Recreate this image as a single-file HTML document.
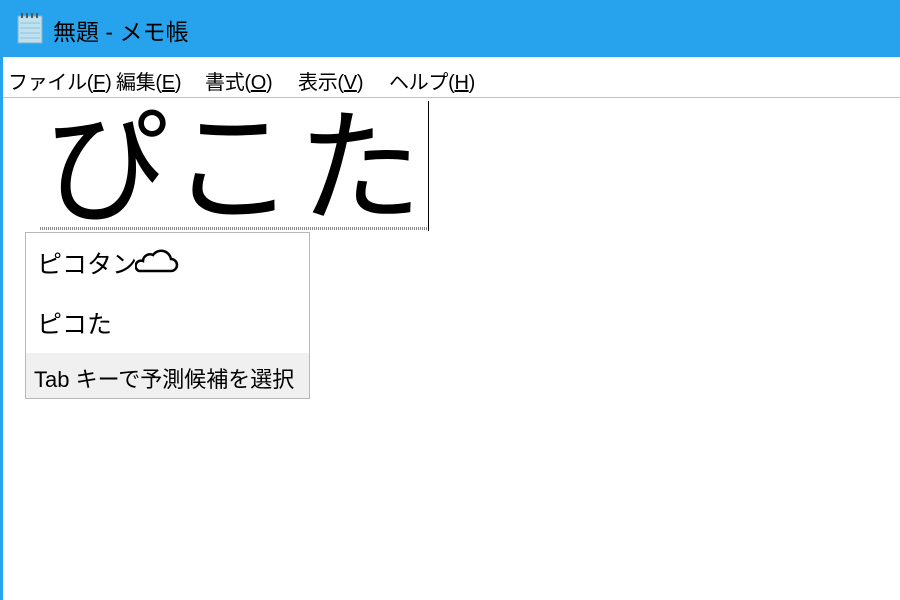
<!DOCTYPE html>
<html><head><meta charset="utf-8"><style>
body{margin:0;width:900px;height:600px;overflow:hidden;background:#fff;position:relative;font-family:"Liberation Sans","Noto Sans CJK JP",sans-serif;}
.title{position:absolute;left:0;top:0;width:900px;height:57px;background:#27a3ee;}
.title span{position:absolute;left:53px;top:13px;font-size:23px;color:#000;}
.menu{position:absolute;left:3px;top:57px;width:897px;height:40px;border-bottom:1px solid #9ccdf0;}
.menu span{position:absolute;top:9px;font-size:20px;color:#000;letter-spacing:-0.3px;}
.lb{position:absolute;left:0;top:57px;width:3px;height:543px;background:#27a3ee;}
.big{position:absolute;left:44px;top:104px;font-size:124px;line-height:130px;color:#000;letter-spacing:3px;font-weight:400;white-space:nowrap;}
.caret{position:absolute;left:428px;top:101px;width:1px;height:130px;background:#000;}
.wave{position:absolute;left:40px;top:227px;width:388px;height:3px;background:repeating-linear-gradient(90deg,#888 0 1px,#fff 1px 2px);}
.pop{position:absolute;left:25px;top:232px;width:283px;height:165px;border:1px solid #b8b8b8;background:#fff;}
.pop .r{position:absolute;left:11px;font-size:25px;color:#000;white-space:nowrap;}
.pop .f{position:absolute;left:0;top:120px;width:283px;height:45px;background:#f0f0f0;}
.pop .f span{position:absolute;left:8px;top:9px;font-size:22px;white-space:nowrap;}
</style></head><body>
<div class="title">
<svg style="position:absolute;left:16px;top:12px" width="30" height="32" viewBox="0 0 30 32"><rect x="2" y="4" width="24" height="27" fill="#bfe0ee" stroke="#7fb0c8"/><g stroke="#8fc4dc"><line x1="4" y1="11" x2="24" y2="11"/><line x1="4" y1="16" x2="24" y2="16"/><line x1="4" y1="21" x2="24" y2="21"/><line x1="4" y1="26" x2="24" y2="26"/></g><g fill="#555"><rect x="5" y="1" width="2" height="5"/><rect x="10" y="1" width="2" height="5"/><rect x="15" y="1" width="2" height="5"/><rect x="20" y="1" width="2" height="5"/></g></svg>
<span>無題 - メモ帳</span></div>
<div class="lb"></div>
<div class="menu">
<span style="left:5px">ファイル(<u>F</u>)</span>
<span style="left:113px">編集(<u>E</u>)</span>
<span style="left:202px">書式(<u>O</u>)</span>
<span style="left:295px">表示(<u>V</u>)</span>
<span style="left:386px">ヘルプ(<u>H</u>)</span>
</div>
<div class="big">ぴこた</div>
<div class="caret"></div>
<div class="wave"></div>
<div class="pop">
<div class="r" style="top:12px">ピコタン<svg width="44" height="30" viewBox="0 0 44 30" style="vertical-align:-2px;margin-left:-2px"><path d="M4 26 H36 a6 6 0 0 0 0-12 a10 10 0 0 0-18-4 a7 7 0 0 0-10 6 a5 5 0 0 0-4 10z" fill="none" stroke="#000" stroke-width="2.5"/></svg></div>
<div class="r" style="top:72px">ピコた</div>
<div class="f"><span>Tab キーで予測候補を選択</span></div>
</div>
</body></html>
